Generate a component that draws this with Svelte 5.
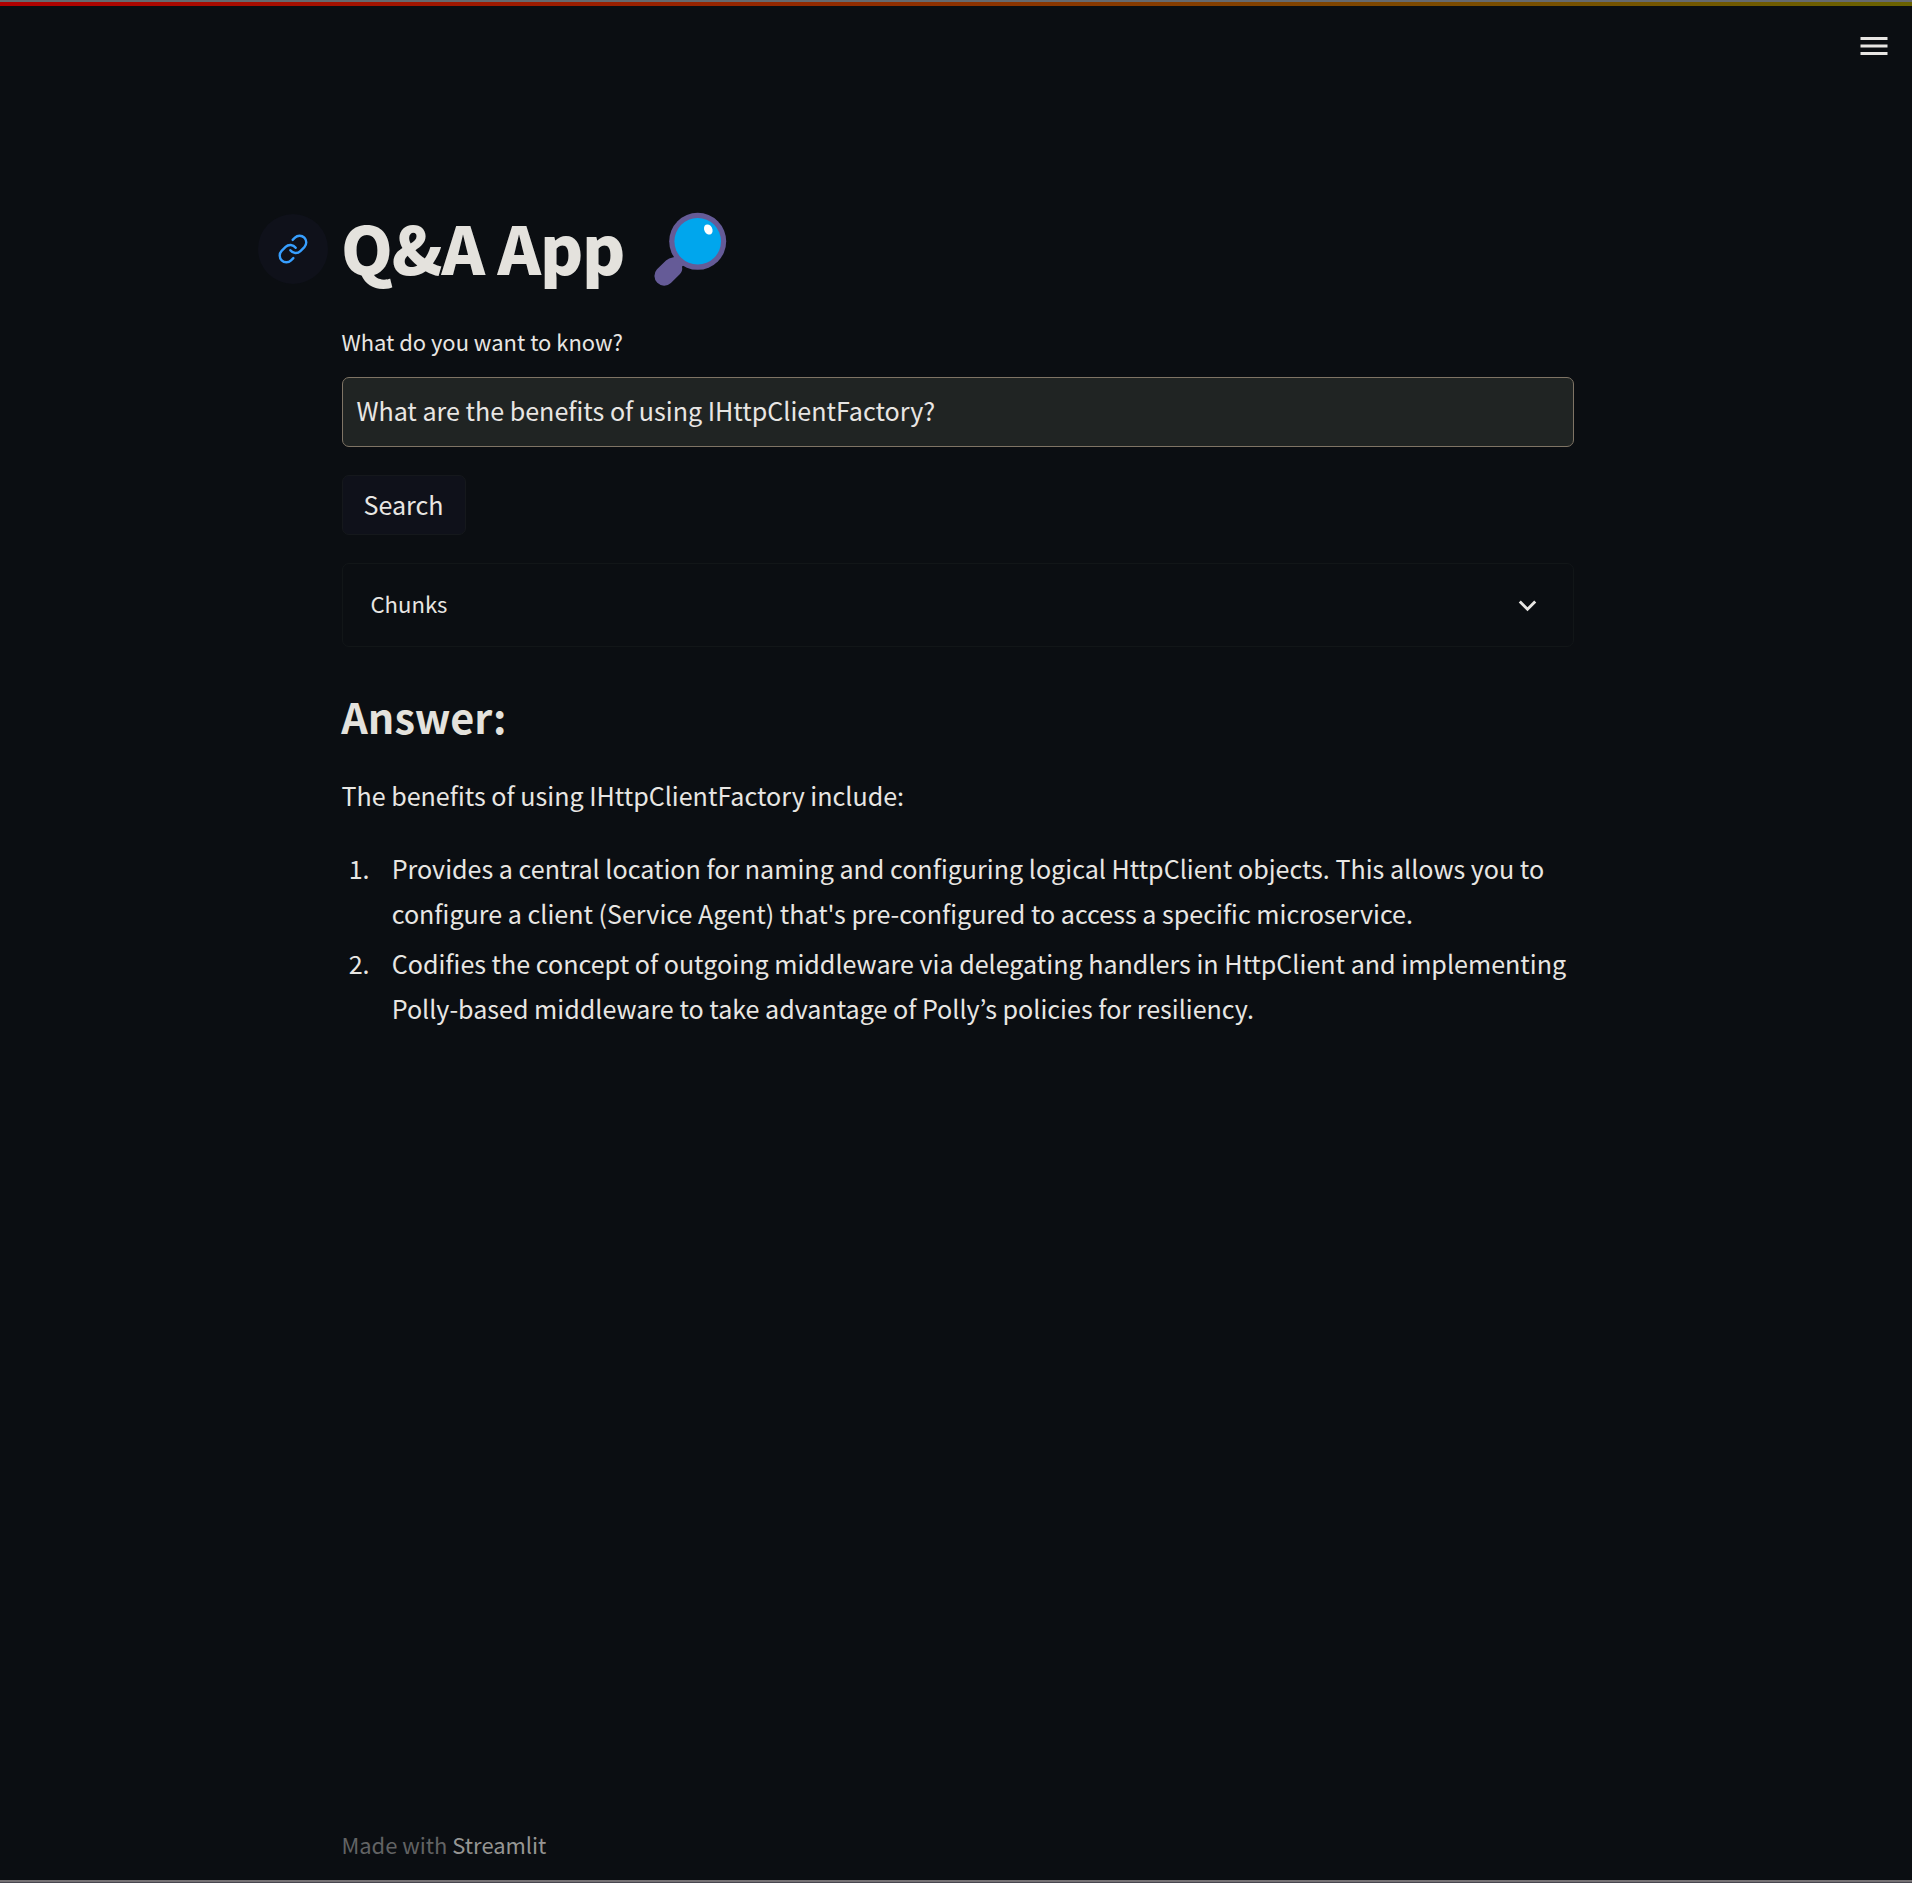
<script>
  const question = 'What are the benefits of using IHttpClientFactory?';
  const benefits = [
    "Provides a central location for naming and configuring logical HttpClient objects. This allows you to configure a client (Service Agent) that's pre-configured to access a specific microservice.",
    'Codifies the concept of outgoing middleware via delegating handlers in HttpClient and implementing Polly-based middleware to take advantage of Polly’s policies for resiliency.'
  ];
</script>

<div class="app">
  <div class="edge-top"></div>
  <div class="decoration"></div>

  <header class="toolbar">
    <svg class="menu" viewBox="0 0 24 24" aria-hidden="true">
      <path d="M3 18h18v-2H3v2zm0-5h18v-2H3v2zm0-7v2h18V6H3z" />
    </svg>
  </header>

  <main class="content">
    <div class="title-row">
      <a class="anchor" href="#q-a-app" aria-label="Link to heading">
        <svg viewBox="0 0 24 24">
          <path d="M10 13a5 5 0 0 0 7.54.54l3-3a5 5 0 0 0-7.07-7.07l-1.72 1.71" />
          <path d="M14 11a5 5 0 0 0-7.54-.54l-3 3a5 5 0 0 0 7.07 7.07l1.71-1.71" />
        </svg>
      </a>
      <h1>Q&amp;A App</h1>
      <svg class="lens" viewBox="0 0 74 74" aria-hidden="true">
        <path
          class="frame"
          d="M19.6 45.4 Q24 44 28.3 46 L31 43.3 L37 49 L29 54.5 Q30 59 26.5 62.5 L17.9 71 A9.8 9.8 0 0 1 4 57.2 L13 48.500 Q16 45.6 19.6 45.4 Z"
        />
        <circle class="frame" cx="44.7" cy="29.3" r="28.5" />
        <circle class="glass" cx="44.7" cy="29.3" r="23.3" />
        <ellipse class="shine" cx="55.3" cy="17.5" rx="4" ry="5.3" transform="rotate(-28 55.3 17.5)" />
      </svg>
    </div>

    <label class="label" for="question">What do you want to know?</label>
    <input id="question" class="field" type="text" value={question} />

    <button class="search">Search</button>

    <section class="expander">
      <span>Chunks</span>
      <svg viewBox="0 0 24 24" aria-hidden="true">
        <path d="M16.59 8.59 12 13.17 7.41 8.59 6 10l6 6 6-6z" />
      </svg>
    </section>

    <h2>Answer:</h2>
    <p class="intro">The benefits of using IHttpClientFactory include:</p>
    <ol>
      {#each benefits as benefit, i}
        <li><span class="num">{i + 1}.</span><span class="text">{benefit}</span></li>
      {/each}
    </ol>
  </main>

  <footer>Made with <a href="#streamlit">Streamlit</a></footer>
  <div class="edge-bottom"></div>
</div>

<style>
  :global(body) {
    margin: 0;
    background: #0b0e12;
  }
  .app {
    box-sizing: border-box;
    height: 1883px;
    display: flex;
    flex-direction: column;
    overflow: hidden;
    background: #0b0e12;
    color: #e8e6e3;
    font-family: 'Noto Sans CJK KR', 'Noto Sans', sans-serif;
    font-size: 25.08px;
    line-height: 45px;
  }
  .edge-top {
    flex: none;
    height: 2px;
    background: #66696e;
  }
  .decoration {
    flex: none;
    height: 4px;
    background: linear-gradient(90deg, #b00000, #6a6200);
  }
  .toolbar {
    flex: none;
    height: 80px;
    box-sizing: border-box;
    padding: 21.5px 20px 0 0;
    display: flex;
    justify-content: flex-end;
    align-items: flex-start;
  }
  .menu {
    width: 36px;
    height: 36px;
    fill: #e8e6e3;
  }
  .content {
    width: 1232px;
    margin: 128px 0 0 342px;
    display: flex;
    flex-direction: column;
    align-items: stretch;
    flex: 1;
  }
  .title-row {
    display: flex;
    align-items: flex-start;
    height: 70px;
    margin-left: -84px;
  }
  .anchor {
    flex: none;
    width: 70px;
    height: 70px;
    border-radius: 50%;
    background: #0f111a;
    display: flex;
    align-items: center;
    justify-content: center;
  }
  .anchor svg {
    width: 32px;
    height: 32px;
    fill: none;
    stroke: #379fff;
    stroke-width: 1.8;
    stroke-linecap: round;
    stroke-linejoin: round;
  }
  h1 {
    margin: 0 0 0 13px;
    width: 313px;
    color: #e4e2dd;
    font-size: 66px;
    font-weight: 900;
    line-height: 65px;
    letter-spacing: -1.25px;
    white-space: nowrap;
  }
  .lens {
    flex: none;
    width: 74px;
    height: 74px;
    margin: -2px 0 0 -1px;
    overflow: visible;
  }
  .frame {
    fill: #655b97;
  }
  .glass {
    fill: #00a6ed;
  }
  .shine {
    fill: #fff;
  }
  .label {
    display: block;
    margin: 38px 0 0 -0.6px;
    height: 55px;
    font-size: 21.95px;
    line-height: 39px;
  }
  .field {
    box-sizing: border-box;
    display: block;
    width: 100%;
    height: 70px;
    padding: 0 14px 4px 13.4px;
    border: 1px solid #7f7465;
    border-radius: 7px;
    background: #202423;
    color: inherit;
    font: inherit;
    outline: none;
  }
  .search {
    box-sizing: border-box;
    align-self: flex-start;
    width: 124px;
    height: 60px;
    margin-top: 28px;
    padding: 0 1px 2px 0;
    border: 1px solid #15181c;
    border-radius: 7px;
    background: #0f111a;
    color: inherit;
    font: inherit;
    line-height: 40px;
  }
  .expander {
    box-sizing: border-box;
    height: 84px;
    margin-top: 28px;
    padding: 0 28px 0 27.5px;
    border: 1px solid #121618;
    border-radius: 7px;
    display: flex;
    align-items: center;
    justify-content: space-between;
    font-size: 22.1px;
  }
  .expander span {
    padding-bottom: 3px;
  }
  .expander svg {
    width: 35px;
    height: 35px;
    fill: #e8e6e3;
  }
  h2 {
    margin: 42px 0 0 -0.7px;
    height: 84px;
    color: #e4e2dd;
    font-size: 41.4px;
    font-weight: 700;
    line-height: 54px;
  }
  .intro {
    margin: 0 0 0 -0.6px;
    height: 45px;
  }
  ol {
    list-style: none;
    margin: 28px 0 0;
    padding: 0;
    display: flex;
    flex-direction: column;
    gap: 5px;
  }
  li {
    display: flex;
  }
  .num {
    flex: none;
    width: 43px;
    margin-left: 6.7px;
  }
  .text {
    flex: 1;
  }
  footer {
    flex: none;
    height: 54px;
    padding-left: 341.4px;
    color: #626364;
    font-size: 21.95px;
    line-height: 38px;
  }
  footer a {
    color: #969694;
    text-decoration: none;
  }
  .edge-bottom {
    flex: none;
    height: 2px;
    background: #757174;
    border-bottom: 1px solid #48464f;
  }
</style>
